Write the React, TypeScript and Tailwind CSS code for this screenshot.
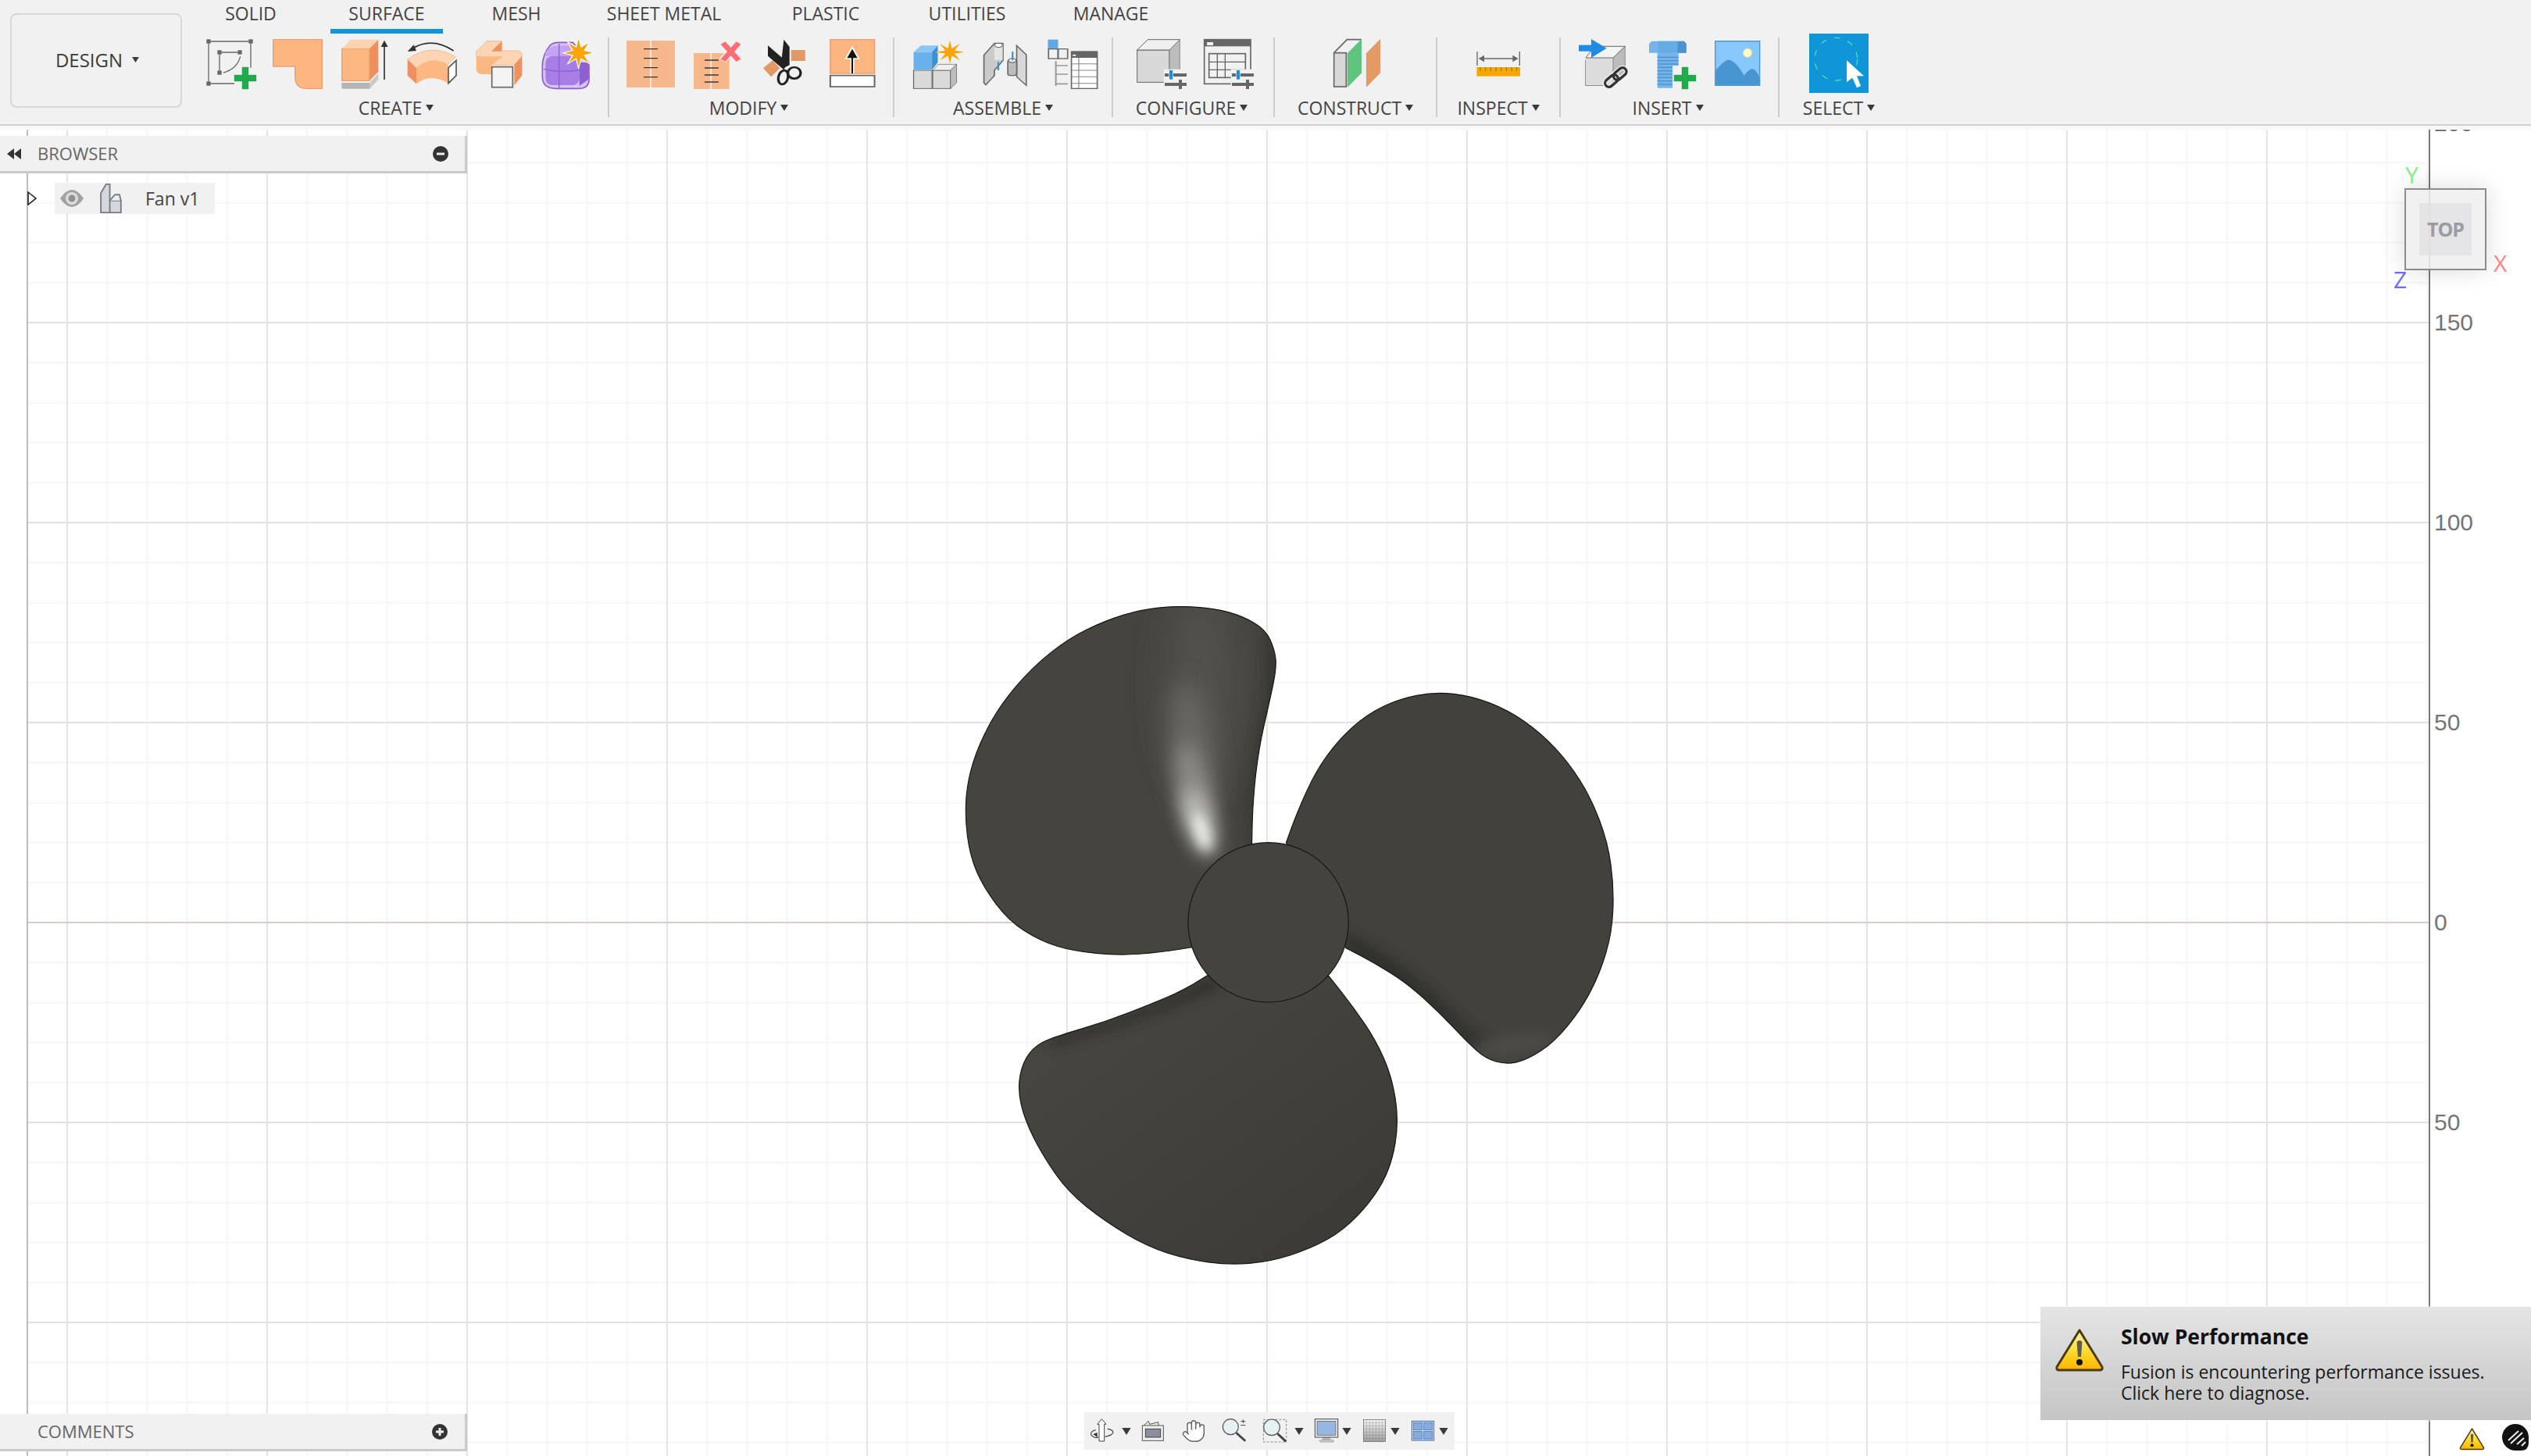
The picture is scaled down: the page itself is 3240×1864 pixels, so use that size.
import React from "react";
import { Hand } from "lucide-react";

type Pt = [number, number];

const range = (from: number, to: number, step: number) => {
  const out: number[] = [];
  for (let v = from; v <= to; v += step) out.push(v);
  return out;
};

// smooth outline through a list of points (midpoint quadratics)
const smooth = (pts: Pt[]) => {
  const mid = (a: Pt, b: Pt) => `${(a[0] + b[0]) / 2} ${(a[1] + b[1]) / 2}`;
  let d = `M${pts[0][0]} ${pts[0][1]} L${mid(pts[0], pts[1])}`;
  for (let i = 1; i < pts.length - 1; i++) d += ` Q${pts[i][0]} ${pts[i][1]} ${mid(pts[i], pts[i + 1])}`;
  return d + ` L${pts[pts.length - 1][0]} ${pts[pts.length - 1][1]} Z`;
};

const star = (cx: number, cy: number, R: number, r: number, n = 8) =>
  range(0, 2 * n - 1, 1)
    .map((i) => {
      const a = (Math.PI * i) / n - Math.PI / 2;
      const rad = i % 2 === 0 ? R : r;
      return `${cx + rad * Math.cos(a)},${cy + rad * Math.sin(a)}`;
    })
    .join(" ");

const Ico: React.FC<{ x: number; w?: number; children: React.ReactNode }> = ({ x, w = 198, children }) => (
  <svg
    viewBox={`${x} 54 ${w} 198`}
    preserveAspectRatio="none"
    className="w-[66px] h-[66px] shrink-0 overflow-visible"
  >
    {children}
  </svg>
);

const Plus = ({ x, y }: { x: number; y: number }) => (
  <g fill="#22ab4c" stroke="#1c9a43" strokeWidth="1">
    <rect x={x} y={y + 30} width="84" height="24" />
    <rect x={x + 30} y={y} width="24" height="84" />
    <rect x={x + 31} y={y + 31} width="22" height="22" stroke="none" />
  </g>
);

const Sliders = ({ x, knob = true }: { x: number; knob?: boolean }) => (
  <g>
    <rect x={x - 4} y="176" width="92" height="78" fill="#f1f1f1" />
    <rect x={x} y="192" width="84" height="12" fill="#666" />
    <rect x={x} y="228" width="84" height="12" fill="#666" />
    <rect x={x + 54} y="216" width="12" height="36" fill="#666" />
    {knob && <rect x={x + 17} y="179" width="14" height="37" fill="#1f8ce0" stroke="#fff" strokeWidth="2" />}
  </g>
);

const Caret = ({ className = "w-[10px] h-[8px]" }: { className?: string }) => (
  <svg viewBox="0 0 10 8" className={`${className} shrink-0`}>
    <polygon points="0,0 10,0 5,8" fill="#3a3a3a" />
  </svg>
);

const Warning = ({ id, className }: { id: string; className: string }) => (
  <svg viewBox="0 0 64 56" className={className}>
    <defs>
      <linearGradient id={id} x1="0" y1="0" x2="0" y2="1">
        <stop offset="0" stopColor="#fff6b0" />
        <stop offset="0.55" stopColor="#ffd92e" />
        <stop offset="1" stopColor="#ffb400" />
      </linearGradient>
    </defs>
    <path
      d="M32 3 L61 50 Q62 54 58 54 H6 Q2 54 3 50 Z"
      fill={`url(#${id})`}
      stroke="#4a3c10"
      strokeWidth="3"
      strokeLinejoin="round"
    />
    <path d="M28.5 18 Q32 14 35.5 18 L34 37 H30 Z" fill="#5c5c50" />
    <circle cx="32" cy="44" r="4" fill="#111" />
  </svg>
);

const tabs = [
  { label: "SOLID", cls: "ml-[26px] w-[106px]" },
  { label: "SURFACE", cls: "ml-[49px] w-[144px] border-b-[6px] border-[#0f96d8] text-[#0f8fd0]" },
  { label: "MESH", cls: "ml-[43px] w-[102px]" },
  { label: "SHEET METAL", cls: "ml-[44px] w-[188px]" },
  { label: "PLASTIC", cls: "ml-[49px] w-[128px]" },
  { label: "UTILITIES", cls: "ml-[47px] w-[140px]" },
  { label: "MANAGE", cls: "ml-[46px] w-[136px]" },
];

const Section: React.FC<{ label: string; cls: string; iconCls?: string; labelCls?: string; children: React.ReactNode }> = ({
  label,
  cls,
  iconCls = "gap-5",
  labelCls = "",
  children,
}) => (
  <div className={`flex flex-col h-[102px] ${cls}`}>
    <div className={`flex h-[66px] items-center justify-center ${iconCls}`}>{children}</div>
    <div className={`mt-[12px] flex h-[24px] items-center justify-center gap-[5px] text-[23px] leading-none text-[#444] ${labelCls}`}>
      {label}
      <Caret />
    </div>
  </div>
);

const Toolbar = () => (
  <div className="shrink-0">
    <div className="flex h-[161px] bg-[#f1f1f1] border-b-2 border-[#d2d2d2]">
      <div className="w-[242px] shrink-0 pl-[13px] pt-[17px]">
        <div className="flex h-[121px] w-[220px] items-center justify-center gap-[12px] rounded-lg border-2 border-[#d8d8d8] pb-[2px] pl-[3px] text-[24px] text-[#3c3c3c]">
          DESIGN
          <Caret className="w-[9px] h-[7px]" />
        </div>
      </div>
      <div className="flex flex-col">
        <div className="flex h-[48px]">
          {tabs.map((t) => (
            <div key={t.label} className={`h-[43px] text-center text-[23px] leading-[35px] text-[#444] ${t.cls}`}>
              {t.label}
            </div>
          ))}
        </div>
        <div className="flex">
          <Section label="CREATE" cls="w-[536px]" labelCls="pr-[6px]">
            <Ico x={36}>
              <g fill="#666">
                <rect x="43" y="61" width="16" height="16" />
                <rect x="205" y="61" width="16" height="16" />
                <rect x="43" y="223" width="16" height="16" />
                <rect x="85" y="103" width="16" height="16" />
                <rect x="163" y="103" width="16" height="16" />
                <rect x="85" y="181" width="16" height="16" />
              </g>
              <path
                d="M59 69 H205 M51 77 V223 M213 77 V170 M59 231 H150 M101 111 H163 M93 119 V181 M173 127 Q160 175 108 189"
                stroke="#666"
                strokeWidth="4"
                fill="none"
              />
              <Plus x={150} y={168} />
            </Ico>
            <Ico x={297}>
              <path
                d="M302 62 H490 V250 H430 Q386 250 386 205 V165 H302 Z"
                fill="#feb680"
                stroke="#e9a070"
                strokeWidth="4"
              />
            </Ico>
            <Ico x={555}>
              <rect x="566" y="97" width="106" height="123" fill="#fdb781" stroke="#ee9c68" strokeWidth="4" />
              <polygon points="566,97 600,62 706,62 672,97" fill="#fcd2b1" />
              <polygon points="672,97 706,62 706,185 672,220" fill="#ee8f5e" />
              <rect x="565" y="228" width="107" height="23" fill="#b5b5b5" />
              <polygon points="672,228 706,192 706,216 672,251" fill="#c9c9c9" />
              <path d="M729 88 V216" stroke="#333" strokeWidth="5" />
              <polygon points="716,90 729,65 743,90" fill="#333" />
            </Ico>
            <Ico x={813}>
              <path d="M818 138 Q905 72 1003 128 L972 158 Q905 122 852 172 Z" fill="#fdd4b4" stroke="#f0c09c" strokeWidth="3" />
              <path d="M852 172 Q905 122 972 158 V228 Q905 190 852 232 Z" fill="#fdb781" />
              <polygon points="818,138 852,172 852,232 818,200" fill="#ee9060" />
              <polygon points="975,170 1005,142 1005,200 975,230" fill="#fff" stroke="#555" strokeWidth="5" />
              <path d="M995 105 Q910 50 835 98" stroke="#333" strokeWidth="5" fill="none" />
              <polygon points="818,108 842,82 852,105" fill="#333" />
            </Ico>
            <Ico x={1071}>
              <path
                d="M1082 128 V108 L1122 68 H1180 V105 H1240 Q1258 105 1258 125 L1228 160 H1140 L1180 128 Z"
                fill="#fdd4b4"
                stroke="#f0bc96"
                strokeWidth="3"
              />
              <polygon points="1140,107 1180,68 1180,107" fill="#ee9360" />
              <path d="M1082 128 H1180 L1140 160 V195 H1105 Q1082 195 1082 175 Z" fill="#fdb781" />
              <polygon points="1228,160 1258,125 1258,200 1228,238" fill="#ee9360" />
              <rect x="1142" y="167" width="80" height="78" fill="#f4f4f4" stroke="#666" strokeWidth="5" />
            </Ico>
            <Ico x={1326}>
              <path
                d="M1333 165 Q1333 120 1362 85 Q1372 73 1395 73 H1450 L1512 150 V215 Q1512 250 1470 250 H1385 Q1333 250 1333 205 Z"
                fill="#d8c2f6"
                stroke="#8a5fc8"
                strokeWidth="5"
              />
              <path d="M1345 110 Q1365 85 1395 85 H1440 L1470 125 H1345 Z" fill="#c4a2f4" />
              <rect x="1345" y="125" width="130" height="112" rx="26" fill="#a77de6" />
              <path d="M1397 78 V248 M1338 175 Q1400 192 1505 175" stroke="#8a62c8" strokeWidth="4" fill="none" />
              <polygon points="1475,150 1510,150 1510,215 1475,240" fill="#8d5fd0" />
              <polygon points={star(1472, 113, 56, 24)} fill="#fff" stroke="#fff" strokeWidth="5" />
              <polygon points={star(1472, 113, 50, 20)} fill="#f9a506" stroke="#e08e00" strokeWidth="1.5" />
            </Ico>
          </Section>

          <Section label="MODIFY" cls="w-[365px] border-l-2 border-[#cdcdcd]" labelCls="pr-[6px]">
            <Ico x={49} w={162}>
              <rect x="54" y="66" width="74" height="180" fill="#f6b88a" />
              <rect x="132" y="66" width="74" height="180" fill="#f6b88a" />
              <path d="M108 98 H152 M108 134 H152 M108 170 H152 M108 206 H152" stroke="#3d3530" strokeWidth="4" />
            </Ico>
            <Ico x={260} w={162}>
              <rect x="265" y="114" width="52" height="138" fill="#f6b88a" />
              <rect x="321" y="114" width="56" height="138" fill="#f6b88a" />
              <path d="M299 141 H343 M299 171 H343 M299 198 H343 M299 225 H343" stroke="#3d3530" strokeWidth="4" />
              <path d="M355 75 L408 142 M408 75 L355 142" stroke="#f1f1f1" strokeWidth="26" />
              <path d="M357 75 L406 142 M406 75 L357 142" stroke="#fd6e74" strokeWidth="18" />
            </Ico>
            <Ico x={473} w={162}>
              <rect x="573" y="102" width="44" height="42" fill="#e19a66" />
              <polygon points="485,172 515,142 538,172 510,205" fill="#e19a66" />
              <polygon points="550,62 568,90 568,160 548,172 542,150" fill="#222" />
              <polygon points="500,85 562,150 550,178 500,125" fill="#222" />
              <ellipse cx="548" cy="207" rx="15" ry="27" transform="rotate(10 548 207)" fill="none" stroke="#222" strokeWidth="8" />
              <ellipse cx="583" cy="190" rx="20" ry="22" fill="none" stroke="#222" strokeWidth="8" />
            </Ico>
            <Ico x={676} w={162}>
              <rect x="688" y="62" width="139" height="130" fill="#feb680" stroke="#e9a070" strokeWidth="4" />
              <path d="M757 130 V192" stroke="#fff" strokeWidth="12" />
              <polygon points="737,135 757,92 777,135" fill="#111" stroke="#fff" strokeWidth="5" />
              <path d="M757 130 V192" stroke="#111" strokeWidth="5" />
              <rect x="688" y="200" width="139" height="43" fill="#fff" stroke="#666" strokeWidth="5" />
            </Ico>
          </Section>

          <Section label="ASSEMBLE" cls="w-[280px] border-l-2 border-[#cdcdcd]" iconCls="gap-[22px]">
            <Ico x={936} w={162}>
              <rect x="952" y="180" width="58" height="70" fill="#dadada" stroke="#666" strokeWidth="3" />
              <rect x="1012" y="180" width="56" height="70" fill="#dadada" stroke="#666" strokeWidth="3" />
              <polygon points="1012,180 1030,157 1087,157 1068,180" fill="#f0f0f0" stroke="#666" strokeWidth="2" />
              <polygon points="1068,180 1087,157 1087,228 1068,250" fill="#bdbdbd" stroke="#666" strokeWidth="2" />
              <rect x="952" y="110" width="58" height="68" fill="#6ab0ea" />
              <polygon points="952,110 975,85 1028,85 1010,110" fill="#8cc6f5" />
              <polygon points="1010,110 1028,85 1028,150 1010,178" fill="#3f8fd0" />
              <polygon points={star(1066, 110, 46, 20)} fill="#fff" />
              <polygon points={star(1066, 110, 42, 15)} fill="#f9a506" stroke="#e08e00" />
            </Ico>
            <Ico x={1151} w={162}>
              <path d="M1172 122 L1205 76 H1232 V142 L1205 180 V200 L1178 236 L1172 228 Z" fill="#cacaca" stroke="#666" strokeWidth="4" />
              <rect x="1205" y="78" width="26" height="62" fill="#e4e4e4" />
              <ellipse cx="1218" cy="84" rx="12" ry="8" fill="#fff" stroke="#666" strokeWidth="3" />
              <path d="M1275 85 L1305 120 V238 L1275 205 Z" fill="#d8d8d8" stroke="#666" strokeWidth="4" />
              <rect x="1247" y="140" width="28" height="60" rx="8" fill="#bcbcbc" stroke="#666" strokeWidth="4" />
              <ellipse cx="1261" cy="142" rx="12" ry="8" fill="#eee" stroke="#666" strokeWidth="3" />
              <path d="M1217 148 V180 M1262 108 V142" stroke="#2a8fe0" strokeWidth="5" />
            </Ico>
            <Ico x={1367} w={162}>
              <rect x="1373" y="62" width="32" height="36" fill="#5ea9e4" />
              <rect x="1375" y="98" width="30" height="37" fill="none" stroke="#666" strokeWidth="4" />
              <rect x="1405" y="98" width="30" height="37" fill="none" stroke="#666" strokeWidth="4" />
              <path d="M1398 145 V240 M1398 162 H1436 M1398 195 H1436 M1398 232 H1436" stroke="#999" strokeWidth="5" fill="none" />
              <rect x="1447" y="108" width="81" height="142" fill="#fff" stroke="#666" strokeWidth="4" />
              <rect x="1447" y="108" width="81" height="24" fill="#666" />
              <rect x="1451" y="120" width="10" height="5" fill="#fff" />
              <path d="M1447 155 H1528 M1447 180 H1528 M1447 205 H1528 M1447 230 H1528 M1470 132 V250" stroke="#888" strokeWidth="3" />
            </Ico>
          </Section>

          <Section label="CONFIGURE" cls="w-[207px] border-l-2 border-[#cdcdcd]" iconCls="gap-5 pl-[5px]" labelCls="pr-[4px]">
            <Ico x={69}>
              <rect x="74" y="102" width="124" height="124" fill="#d8d8d8" stroke="#666" strokeWidth="3" />
              <polygon points="74,102 115,62 238,62 198,102" fill="#f0f0f0" stroke="#666" strokeWidth="3" />
              <polygon points="198,102 238,62 238,190 198,226" fill="#bcbcbc" stroke="#666" strokeWidth="2" />
              <Sliders x={180} />
            </Ico>
            <Ico x={327}>
              <rect x="332" y="62" width="178" height="170" fill="none" stroke="#666" strokeWidth="5" />
              <rect x="332" y="62" width="178" height="26" fill="#666" />
              <rect x="342" y="72" width="24" height="12" fill="#f1f1f1" />
              <rect x="350" y="116" width="140" height="92" fill="none" stroke="#666" strokeWidth="5" />
              <path d="M382 116 V208 M412 116 V208 M350 148 H490 M350 178 H490" stroke="#666" strokeWidth="4" />
              <Sliders x={438} />
            </Ico>
          </Section>

          <Section label="CONSTRUCT" cls="w-[208px] border-l-2 border-[#cdcdcd]" iconCls="gap-5 pl-[4px]">
            <Ico x={819}>
              <rect x="830" y="113" width="47" height="130" fill="#d8d8d8" stroke="#666" strokeWidth="5" />
              <path d="M830 113 L880 62 H935" fill="none" stroke="#666" strokeWidth="5" />
              <polygon points="883,115 935,62 935,190 883,243" fill="#5ec57f" stroke="#4bb06c" strokeWidth="2" />
              <polygon points="955,115 1007,62 1007,190 955,243" fill="#e59a66" stroke="#d08a58" strokeWidth="2" />
            </Ico>
          </Section>

          <Section label="INSPECT" cls="w-[158px] border-l-2 border-[#cdcdcd]">
            <Ico x={1365}>
              <path d="M1383 108 V162 M1546 108 V162" stroke="#666" strokeWidth="4" />
              <path d="M1395 135 H1535" stroke="#666" strokeWidth="5" />
              <polygon points="1388,135 1410,122 1410,148" fill="#666" />
              <polygon points="1541,135 1519,122 1519,148" fill="#666" />
              <rect x="1381" y="168" width="167" height="35" fill="#f5a800" />
              {range(1395, 1540, 20).map((x) => (
                <path key={x} d={`M${x} 168 V183`} stroke="#8a6a10" strokeWidth="3" />
              ))}
            </Ico>
          </Section>

          <Section label="INSERT" cls="w-[280px] border-l-2 border-[#cdcdcd]" labelCls="pr-[4px]">
            <Ico x={81}>
              <path d="M117 140 V238 H190" fill="none" stroke="#666" strokeWidth="4" />
              <rect x="117" y="132" width="105" height="106" fill="#dcdcdc" />
              <polygon points="117,132 150,88 268,88 222,132" fill="#f4f4f4" stroke="#666" strokeWidth="3" />
              <polygon points="222,132 268,88 268,190 222,238" fill="#bcbcbc" stroke="#666" strokeWidth="2" />
              <rect x="90" y="83" width="50" height="24" fill="#1e8ce4" />
              <polygon points="138,60 197,95 138,132" fill="#1e8ce4" />
              <g transform="rotate(-40 232 207)" fill="none">
                <rect x="183" y="192" width="56" height="30" rx="15" stroke="#f1f1f1" strokeWidth="18" />
                <rect x="225" y="192" width="56" height="30" rx="15" stroke="#f1f1f1" strokeWidth="18" />
                <rect x="183" y="192" width="56" height="30" rx="15" stroke="#333" strokeWidth="10" />
                <rect x="225" y="192" width="56" height="30" rx="15" stroke="#333" strokeWidth="10" />
              </g>
            </Ico>
            <Ico x={339}>
              <rect x="392" y="113" width="81" height="135" fill="#74b4ea" />
              {range(130, 240, 13).map((y) => (
                <path key={y} d={`M392 ${y} H473`} stroke="#4d92cc" strokeWidth="4" />
              ))}
              <path d="M370 68 H495 L503 78 V113 H360 V78 Z" fill="#74b4ea" />
              <path d="M395 68 H470 V113 H395 Z" fill="#64ace6" />
              <path d="M470 68 H495 L503 78 V113 H470 Z" fill="#4d92cc" />
              <rect x="450" y="162" width="96" height="96" fill="#f1f1f1" />
              <Plus x={456} y={168} />
            </Ico>
            <Ico x={597}>
              <rect x="614" y="68" width="171" height="170" fill="#86c8fc" stroke="#4a96cf" strokeWidth="4" />
              <circle cx="738" cy="113" r="17" fill="#fdfcd0" stroke="#e8d88a" strokeWidth="3" />
              <path d="M616 180 Q650 140 665 140 Q690 140 725 200 Q745 175 755 175 Q770 175 783 205 V236 H616 Z" fill="#4695d0" />
            </Ico>
          </Section>

          <Section label="SELECT" cls="w-[154px] border-l-2 border-[#cdcdcd]">
            <svg viewBox="972 42 228 228" className="w-[76px] h-[76px] shrink-0">
              <rect x="972" y="42" width="228" height="228" fill="#0f96d8" />
              <circle cx="1075" cy="140" r="82" fill="none" stroke="#4fdcb0" strokeWidth="4" strokeDasharray="24 30" />
              <polygon points="1116,145 1116,228 1138,212 1155,250 1170,243 1155,205 1182,205" fill="#fff" />
            </svg>
          </Section>
        </div>
      </div>
    </div>
    <div className="h-[5px] bg-[#f8f8f8]" />
  </div>
);

const CX = 1622;
const CY = 1181;

const GridLines = () => {
  const xs = range(-31, 29, 1).map((k) => ({ k, v: CX + k * 51.2 })).filter((p) => p.v > 35 && p.v < 3110);
  const ys = range(-20, 14, 1).map((k) => ({ k, v: CY + k * 51.2 }));
  return (
    <svg viewBox="0 166 3240 1698" className="absolute inset-0 w-full h-full">
      {xs.filter((p) => p.k % 5 !== 0).map((p) => (
        <line key={`vm${p.k}`} x1={p.v} x2={p.v} y1="166" y2="1864" stroke="#f6f6f6" strokeWidth="2" />
      ))}
      {ys.filter((p) => p.k % 5 !== 0).map((p) => (
        <line key={`hm${p.k}`} x1="35" x2="3110" y1={p.v} y2={p.v} stroke="#f6f6f6" strokeWidth="2" />
      ))}
      {xs.filter((p) => p.k % 5 === 0 && p.k !== 0).map((p) => (
        <line key={`v${p.k}`} x1={p.v} x2={p.v} y1="166" y2="1864" stroke="#e4e4e4" strokeWidth="2" />
      ))}
      {ys.filter((p) => p.k % 5 === 0 && p.k !== 0).map((p) => (
        <line key={`h${p.k}`} x1="35" x2="3110" y1={p.v} y2={p.v} stroke="#e2e2e2" strokeWidth="2" />
      ))}
      <line x1={CX} x2={CX} y1="166" y2="1864" stroke="#d2f0d2" strokeWidth="2" />
      <line x1="35" x2="3110" y1={CY} y2={CY} stroke="#dccccc" strokeWidth="2" />
      <line x1="35" x2="35" y1="166" y2="1864" stroke="#bdbdbd" strokeWidth="2" />
      <line x1="3110" x2="3110" y1="166" y2="1864" stroke="#777" strokeWidth="2" />
    </svg>
  );
};

const blade1: Pt[] = [
  [720, 600], [722, 500], [735, 380], [760, 270], [774, 200], [770, 160], [750, 115], [700, 85], [640, 68],
  [560, 62], [480, 70], [400, 95], [320, 135], [240, 200], [170, 285], [125, 370], [100, 450], [94, 530],
  [105, 620], [135, 690], [190, 765], [260, 810], [330, 832], [430, 842], [520, 835], [600, 822],
];
const blade2: Pt[] = [
  [795, 590], [820, 520], [860, 430], [910, 360], [970, 305], [1040, 270], [1120, 254], [1200, 263], [1280, 295],
  [1350, 345], [1410, 410], [1460, 490], [1497, 590], [1510, 690], [1506, 790], [1480, 880], [1440, 960],
  [1380, 1035], [1320, 1075], [1275, 1085], [1230, 1072], [1190, 1035], [1130, 970], [1060, 905], [990, 860], [925, 825],
];
const blade3: Pt[] = [
  [888, 888], [940, 955], [990, 1030], [1025, 1110], [1041, 1210], [1025, 1310], [985, 1385], [920, 1455],
  [850, 1495], [760, 1525], [670, 1532], [580, 1520], [490, 1490], [400, 1435], [320, 1370], [265, 1290],
  [225, 1210], [209, 1140], [220, 1080], [250, 1040], [300, 1020], [400, 990], [500, 950], [570, 920], [625, 885],
];

const Fan = () => (
  <svg
    viewBox="0 0 1568 1568"
    preserveAspectRatio="none"
    className="absolute left-[1180px] top-[574px] w-[920px] h-[900px]"
  >
    <defs>
      <filter id="b6" x="-80%" y="-50%" width="260%" height="200%"><feGaussianBlur stdDeviation="12" /></filter>
      <filter id="b14" x="-50%" y="-50%" width="200%" height="200%"><feGaussianBlur stdDeviation="14" /></filter>
      <filter id="b20" x="-100%" y="-50%" width="300%" height="200%"><feGaussianBlur stdDeviation="20" /></filter>
      <filter id="b26" x="-100%" y="-50%" width="300%" height="200%"><feGaussianBlur stdDeviation="26" /></filter>
      <filter id="b44" x="-100%" y="-50%" width="300%" height="200%"><feGaussianBlur stdDeviation="40" /></filter>
      <clipPath id="c1"><path d={smooth(blade1)} /></clipPath>
      <clipPath id="c2"><path d={smooth(blade2)} /></clipPath>
      <clipPath id="c3"><path d={smooth(blade3)} /></clipPath>
      <linearGradient id="g3" x1="0" y1="0" x2="1" y2="1">
        <stop offset="0" stopColor="#494842" />
        <stop offset="1" stopColor="#3a3934" />
      </linearGradient>
    </defs>
    <path d={smooth(blade1)} fill="#45443f" />
    <g clipPath="url(#c1)">
      <ellipse cx="610" cy="240" rx="70" ry="230" fill="#52514d" filter="url(#b44)" />
      <path d="M765 130 Q790 200 765 300 Q735 430 728 600 L712 600 Q712 420 745 280 Q760 190 745 120 Z" fill="#2e2d29" opacity="0.7" filter="url(#b14)" />
      <ellipse cx="590" cy="400" rx="42" ry="170" transform="rotate(-6 590 400)" fill="#6a6965" filter="url(#b26)" />
      <ellipse cx="598" cy="490" rx="32" ry="125" transform="rotate(-12 598 490)" fill="#8c8b87" filter="url(#b20)" />
      <ellipse cx="605" cy="545" rx="24" ry="78" transform="rotate(-17 605 545)" fill="#c4c4c0" filter="url(#b20)" />
      <ellipse cx="611" cy="565" rx="11" ry="42" transform="rotate(-17 611 565)" fill="#f6f6f4" filter="url(#b6)" />
    </g>
    <path d={smooth(blade1)} fill="none" stroke="#151512" strokeWidth="2" />

    <path d={smooth(blade2)} fill="#42413c" />
    <g clipPath="url(#c2)">
      <path d="M925 790 Q1050 850 1160 970 Q1210 1030 1260 1040 L1190 1050 Q1050 900 925 840 Z" fill="#2b2a26" opacity="0.7" filter="url(#b14)" />
      <ellipse cx="1290" cy="1040" rx="90" ry="22" transform="rotate(-10 1290 1040)" fill="#4d4c47" filter="url(#b14)" />
    </g>
    <path d={smooth(blade2)} fill="none" stroke="#151512" strokeWidth="2" />

    <path d={smooth(blade3)} fill="url(#g3)" />
    <g clipPath="url(#c3)">
      <path d="M640 885 Q520 950 400 990 L270 1030 L290 1045 Q480 990 650 915 Z" fill="#2b2a26" opacity="0.75" filter="url(#b14)" />
    </g>
    <path d={smooth(blade3)} fill="none" stroke="#151512" strokeWidth="2" />

    <ellipse cx="756" cy="768" rx="175" ry="178" fill="#44433e" stroke="#151512" strokeWidth="2" />
  </svg>
);

const ViewCube = () => (
  <>
    <div className="absolute left-[3078px] top-[75px] flex h-[105px] w-[105px] items-center justify-center border-2 border-[#8c8c8c] bg-[#eeeeef]/85 shadow-[0_0_30px_rgba(0,0,0,0.14)]">
      <div className="flex h-[67px] w-[67px] items-center justify-center bg-[#dfe0e4]/70 text-[25px] font-bold tracking-[-1px] text-[#9a9ca0]">
        TOP
      </div>
    </div>
    <div className="absolute left-[3079px] top-[38px] text-[30px] leading-[40px] text-[#80f080]">Y</div>
    <div className="absolute left-[3192px] top-[151px] text-[30px] leading-[40px] text-[#ff8484]">X</div>
    <div className="absolute left-[3064px] top-[172px] text-[30px] leading-[40px] text-[#6a6aff]">Z</div>
  </>
);

const rulerLabels = [
  { t: "200", cls: "top-[-25px]" },
  { t: "150", cls: "top-[230px]" },
  { t: "100", cls: "top-[486px]" },
  { t: "50", cls: "top-[742px]" },
  { t: "0", cls: "top-[998px]" },
  { t: "50", cls: "top-[1254px]" },
];

const PanelBar: React.FC<{ cls: string; children: React.ReactNode }> = ({ cls, children }) => (
  <div className={`absolute left-0 flex h-[48px] w-[598px] items-center justify-between border-b-[3px] border-r-[3px] border-[#cacaca] bg-[#f1f1f1] text-[22px] text-[#666] ${cls}`}>
    {children}
  </div>
);

const Browser = () => (
  <>
    <PanelBar cls="top-[8px]">
      <div className="flex items-center">
        <svg viewBox="0 0 20 14" className="ml-[8px] h-[14px] w-[20px]">
          <polygon points="10,0 10,14 1,7" fill="#333" />
          <polygon points="19,0 19,14 10,7" fill="#333" />
        </svg>
        <span className="ml-[20px]">BROWSER</span>
      </div>
      <svg viewBox="0 0 20 20" className="mr-[21px] h-[20px] w-[20px]">
        <circle cx="10" cy="10" r="10" fill="#333" />
        <rect x="5" y="8.5" width="10" height="3" fill="#eee" />
      </svg>
    </PanelBar>

    <svg viewBox="0 0 12 18" className="absolute left-[35px] top-[79px] h-[18px] w-[12px]">
      <polygon points="1,1 11,9 1,17" fill="#fff" stroke="#222" strokeWidth="1.6" />
    </svg>
    <div className="absolute left-[70px] top-[68px] flex h-[40px] w-[205px] items-center bg-[#f1f1f1] text-[23px] text-[#444]">
      <svg viewBox="0 0 32 32" className="ml-[6px] h-[32px] w-[32px]">
        <path d="M1 16 Q16 -6 31 16 Q16 38 1 16 Z" fill="#a2a2a2" />
        <circle cx="16" cy="16" r="8" fill="#dcdcdc" />
        <circle cx="16" cy="16" r="4.5" fill="#909090" />
      </svg>
      <svg viewBox="0 0 30 42" className="ml-[19px] h-[40px] w-[29px]">
        <path d="M2 14 L9 2 H14 V24 H29 V40 H2 Z" fill="#d4d8de" stroke="#7a7e84" strokeWidth="2" />
        <path d="M14 24 L21 16 H27 L29 24 M14 24 V40" fill="#eceef0" stroke="#7a7e84" strokeWidth="2" />
      </svg>
      <span className="ml-[30px]">Fan v1</span>
    </div>
  </>
);

const NavBar = () => (
  <div className="absolute left-[1388px] top-[1642px] flex h-[48px] w-[474px] items-center bg-[#f1f1f1] pl-[7px]">
    <svg viewBox="75 54 96 144" className="h-[48px] w-[32px] shrink-0">
      <polygon points="121,80 138,100 131,100 131,165 111,165 111,100 104,100" fill="#fff" stroke="#444" strokeWidth="3" />
      <path d="M98 122 Q76 128 80 140 Q92 156 108 150 M134 148 Q165 142 165 130 Q162 120 143 118" fill="none" stroke="#444" strokeWidth="3.5" />
      <polygon points="88,138 104,132 104,150" fill="#333" />
    </svg>
    <Caret className="ml-[9px] w-[12px] h-[9px]" />
    <svg viewBox="270 54 96 144" className="ml-[12px] h-[48px] w-[32px] shrink-0">
      <path d="M282 105 L300 88 L305 100 L338 92 L340 105" fill="#e8e8e8" stroke="#555" strokeWidth="3" />
      <rect x="277" y="105" width="81" height="58" fill="#efefef" stroke="#555" strokeWidth="3" />
      <rect x="289" y="118" width="58" height="32" fill="#8a8f9b" stroke="#444" strokeWidth="3" />
    </svg>
    <div className="ml-[20px] flex h-[48px] w-[32px] shrink-0 items-center justify-center">
      <Hand className="h-[32px] w-[32px] text-[#666]" fill="#fff" strokeWidth={1.1} />
    </div>
    <svg viewBox="582 54 96 144" className="ml-[20px] h-[48px] w-[32px] shrink-0">
      <path d="M640 135 L670 162" stroke="#444" strokeWidth="9" strokeLinecap="round" />
      <circle cx="616" cy="110" r="30" fill="#e6f1f1" stroke="#555" strokeWidth="3.5" />
      <path d="M664 82 V96 M655 89 H673 M655 104 H673" stroke="#444" strokeWidth="3" />
    </svg>
    <svg viewBox="738 54 96 144" className="ml-[20px] h-[48px] w-[32px] shrink-0">
      <rect x="742" y="82" width="88" height="86" fill="none" stroke="#777" strokeWidth="2.5" strokeDasharray="9 6" />
      <path d="M798 138 L826 164" stroke="#444" strokeWidth="9" strokeLinecap="round" />
      <circle cx="774" cy="112" r="31" fill="#e6f1f1" stroke="#555" strokeWidth="3.5" />
    </svg>
    <Caret className="ml-[9px] w-[12px] h-[9px]" />
    <svg viewBox="936 54 96 144" className="ml-[13px] h-[48px] w-[32px] shrink-0">
      <rect x="968" y="150" width="32" height="11" fill="#bbb" />
      <rect x="958" y="161" width="54" height="7" rx="3" fill="#ddd" stroke="#777" strokeWidth="2" />
      <rect x="940" y="80" width="88" height="70" fill="#efefef" stroke="#444" strokeWidth="3" />
      <rect x="948" y="88" width="72" height="54" fill="#96b5e0" stroke="#555" strokeWidth="2" />
    </svg>
    <Caret className="ml-[4px] w-[12px] h-[9px]" />
    <svg viewBox="1119 54 96 144" className="ml-[13px] h-[48px] w-[32px] shrink-0">
      <defs>
        <linearGradient id="gridfade" x1="0" y1="0" x2="0" y2="1">
          <stop offset="0" stopColor="#fafafa" />
          <stop offset="1" stopColor="#a0a0a0" />
        </linearGradient>
      </defs>
      <rect x="1126" y="82" width="84" height="84" fill="url(#gridfade)" stroke="#555" strokeWidth="2" />
      {range(1138, 1200, 12).map((x) => (
        <path key={x} d={`M${x} 82 V166`} stroke="#777" strokeWidth="1" />
      ))}
      {range(94, 156, 12).map((y) => (
        <path key={y} d={`M1126 ${y} H1210`} stroke="#777" strokeWidth="1" />
      ))}
    </svg>
    <Caret className="ml-[5px] w-[12px] h-[9px]" />
    <svg viewBox="1308 54 96 144" className="ml-[14px] h-[48px] w-[32px] shrink-0">
      <rect x="1312" y="88" width="85" height="74" fill="#c4d8f0" stroke="#3f6ea8" strokeWidth="3" />
      <g fill="#86abdc" stroke="#3f6ea8" strokeWidth="2">
        <rect x="1318" y="94" width="33" height="28" />
        <rect x="1358" y="94" width="33" height="28" />
        <rect x="1318" y="128" width="33" height="28" />
        <rect x="1358" y="128" width="33" height="28" />
      </g>
    </svg>
    <Caret className="ml-[4px] w-[12px] h-[9px]" />
  </div>
);

const Notification = () => (
  <div className="absolute left-[2612px] top-[1507px] flex h-[145px] w-[628px] bg-gradient-to-b from-[#e5e5e5] to-[#c5c5c5] shadow-[0_0_4px_rgba(255,255,255,0.9)]">
    <Warning id="warnBig" className="ml-[18px] mt-[27px] h-[56px] w-[64px] shrink-0" />
    <div className="ml-[21px] pt-[20px] text-[#111]">
      <div className="text-[26.5px] font-bold leading-[36px]">Slow Performance</div>
      <div className="mt-[14px] text-[23px] leading-[27px] text-[#1a1a1a]">
        Fusion is encountering performance issues.
        <br />
        Click here to diagnose.
      </div>
    </div>
  </div>
);

const App: React.FC = () => {
  return (
    <div className="flex h-[1864px] w-[3240px] flex-col overflow-hidden bg-white font-['Open_Sans','Noto_Sans',sans-serif]">
      <Toolbar />
      <div className="relative flex-1 overflow-hidden">
        <GridLines />
        <Fan />
        {rulerLabels.map((l) => (
          <div
            key={l.t + l.cls}
            className={`absolute left-[3116px] font-['Liberation_Sans',sans-serif] text-[30px] leading-[34px] text-[#757575] ${l.cls}`}
          >
            {l.t}
          </div>
        ))}
        <ViewCube />
        <Browser />
        <PanelBar cls="top-[1644px]">
          <span className="ml-[48px]">COMMENTS</span>
          <svg viewBox="0 0 20 20" className="mr-[22px] h-[20px] w-[20px]">
            <circle cx="10" cy="10" r="10" fill="#333" />
            <path d="M5 10 H15 M10 5 V15" stroke="#eee" strokeWidth="3" />
          </svg>
        </PanelBar>
        <NavBar />
        <Notification />
        <Warning id="warnSmall" className="absolute left-[3148px] top-[1661px] h-[30px] w-[33px]" />
        <svg viewBox="0 0 40 34" className="absolute left-[3200px] top-[1657px] h-[34px] w-[40px]">
          <path d="M20 0 A17 17 0 0 1 37 17 V24 Q37 34 27 34 H20 A17 17 0 0 1 20 0 Z" fill="#111" />
          <path d="M11 21 L24 9 M14 25 L29 11 M22 26 L31 18 M28 28 L33 23" stroke="#eee" strokeWidth="2" />
        </svg>
      </div>
    </div>
  );
};

export default App;
